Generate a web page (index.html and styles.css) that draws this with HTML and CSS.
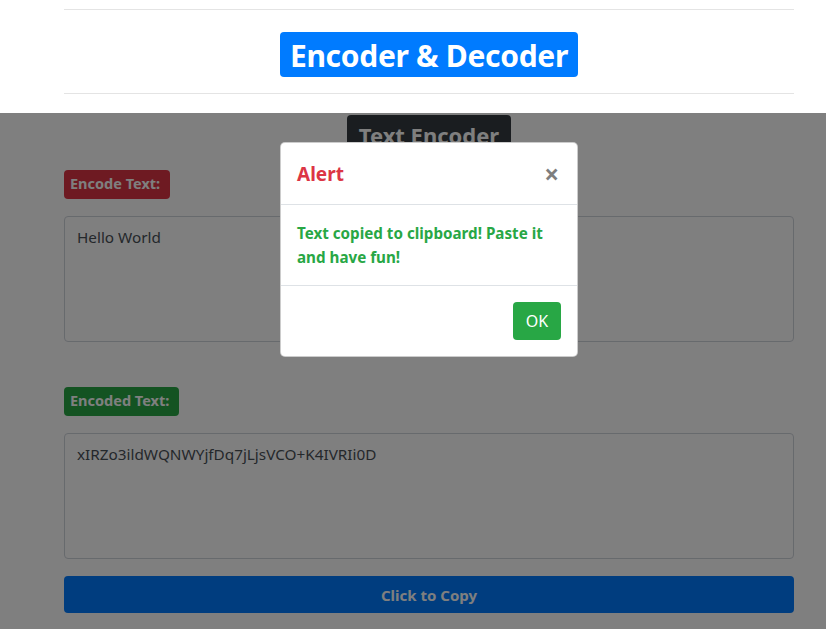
FILE: index.html
```html
<!DOCTYPE html>
<html lang="en">
<head>
<meta charset="utf-8">
<title>Encoder &amp; Decoder</title>
<link rel="stylesheet" href="styles.css">
</head>
<body>
<header class="top">
  <div class="wrap">
    <hr class="rule rule-top">
    <div class="title-row"><h1 class="title">Encoder &amp; Decoder</h1></div>
    <hr class="rule rule-bottom">
  </div>
</header>
<main class="wrap main">
  <div class="sub-row"><h3 class="subtitle">Text Encoder</h3></div>
  <span class="label label-red">Encode Text:</span>
  <div class="field">Hello World</div>
  <span class="label label-green">Encoded Text:</span>
  <div class="field">xIRZo3ildWQNWYjfDq7jLjsVCO+K4IVRIi0D</div>
  <button class="copy">Click to Copy</button>
</main>
<div class="backdrop"></div>
<div class="modal">
  <div class="modal-header">
    <h5 class="modal-title">Alert</h5>
    <span class="close">&times;</span>
  </div>
  <div class="modal-body">Text copied to clipboard! Paste it and have fun!</div>
  <div class="modal-footer"><button class="ok">OK</button></div>
</div>
</body>
</html>
```
FILE: styles.css
```css
* { box-sizing: border-box; }
html, body { margin: 0; padding: 0; }
body {
  font-family: "Noto Sans", "Open Sans", sans-serif;
  color: #212529;
  background: #fff;
  width: 826px;
  height: 629px;
  overflow: hidden;
  position: relative;
}
.wrap { padding: 0 32px 0 64px; }
.top { background: #fff; height: 113px; position: relative; z-index: 3; }
.top .wrap { padding-top: 9px; }
.rule { border: 0; border-top: 1px solid #e4e4e4; margin: 0; }
.title-row { display: flex; justify-content: center; margin-top: 22px; }
.title {
  margin: 0;
  background: #007bff;
  color: #fff;
  font-size: 30px;
  font-weight: 700;
  line-height: 47px;
  height: 45px;
  padding: 0 10px;
  border-radius: 4px;
  letter-spacing: -0.3px;
}
.rule-bottom { margin-top: 16px; }
.main { display: flex; flex-direction: column; align-items: flex-start; }
.sub-row { align-self: stretch; display: flex; justify-content: center; margin-top: 2px; }
.subtitle {
  margin: 0;
  background: #343a40;
  color: #fff;
  font-size: 22px;
  font-weight: 700;
  line-height: 40px;
  height: 40px;
  padding: 0 12px;
  border-radius: 4px;
}
.label {
  display: inline-block;
  color: #fff;
  font-size: 14.5px;
  font-weight: 700;
  line-height: 27px;
  height: 29px;
  padding: 0 8px 0 6px;
  border-radius: 4px;
}
.label-red { background: #dc3545; margin-top: 15px; padding-right: 10px; }
.label-green { background: #28a745; margin-top: 45px; padding-right: 10px; }
.field {
  align-self: stretch;
  margin-top: 17px;
  height: 126px;
  border: 1px solid #ced4da;
  border-radius: 4px;
  padding: 8px 12px;
  font-size: 15.3px;
  line-height: 24px;
  color: #495057;
  background: #fff;
}
.copy {
  align-self: stretch;
  margin-top: 17px;
  height: 37px;
  border: 0;
  border-radius: 4px;
  background: #007bff;
  color: #fff;
  font-family: inherit;
  font-size: 15px;
  font-weight: 700;
}
.backdrop {
  position: absolute;
  left: 0; right: 0; top: 113px; bottom: 0;
  background: rgba(0, 0, 0, 0.5);
  z-index: 2;
}
.modal {
  position: absolute;
  left: 280px;
  top: 142px;
  width: 298px;
  background: #fff;
  border: 1px solid rgba(0, 0, 0, 0.2);
  border-radius: 5px;
  z-index: 4;
}
.modal-header {
  display: flex;
  justify-content: space-between;
  align-items: center;
  padding: 16px;
  border-bottom: 1px solid #dee2e6;
  height: 62px;
}
.modal-title {
  margin: 0;
  color: #dc3545;
  font-size: 19px;
  font-weight: 700;
  line-height: 30px;
}
.close {
  font-size: 26px;
  font-weight: 700;
  color: #000;
  opacity: 0.5;
  line-height: 1;
  margin-right: 2px;
}
.modal-body {
  padding: 16px;
  height: 80px;
  color: #28a745;
  font-weight: 700;
  font-size: 15.2px;
  line-height: 24px;
}
.modal-footer {
  border-top: 1px solid #dee2e6;
  padding: 16px;
  display: flex;
  justify-content: flex-end;
}
.ok {
  background: #28a745;
  color: #fff;
  border: 0;
  border-radius: 4px;
  height: 38px;
  width: 48px;
  font-family: inherit;
  font-size: 16px;
}
```
